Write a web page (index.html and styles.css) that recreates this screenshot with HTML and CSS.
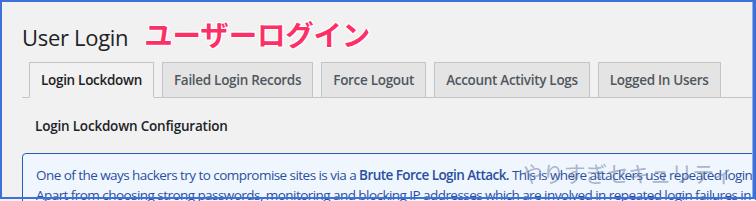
FILE: index.html
```html
<!DOCTYPE html>
<html lang="ja">
<head>
<meta charset="utf-8">
<title>User Login</title>
<link rel="stylesheet" href="styles.css">
</head>
<body>
<div class="wrap">
  <div class="title-row">
    <h1 class="title">User Login</h1>
    <span class="jp-title">ユーザーログイン</span>
  </div>
  <nav class="tabs">
    <a class="tab tab-active">Login Lockdown</a>
    <a class="tab">Failed Login Records</a>
    <a class="tab">Force Logout</a>
    <a class="tab">Account Activity Logs</a>
    <a class="tab">Logged In Users</a>
  </nav>
  <h3 class="section-title">Login Lockdown Configuration</h3>
  <div class="info-box">
    <p class="info-line">One of the ways hackers try to compromise sites is via a <strong>Brute Force Login Attack.</strong> This is where attackers use repeated login attempts until they guess the password.</p>
    <p class="info-line">Apart from choosing strong passwords, monitoring and blocking IP addresses which are involved in repeated login failures in a short period of time is a very effective way to stop these types of attacks.</p>
  </div>
</div>
<div class="watermark">やりすぎセキュリティ</div>
<div class="frame"></div>
</body>
</html>
```
FILE: styles.css
```css
html, body {
  margin: 0;
  padding: 0;
  height: 100%;
  overflow: hidden;
}
body {
  background: #f1f1f1;
  font-family: "Open Sans", "Noto Sans", "Noto Sans CJK JP", sans-serif;
  color: #1d2327;
}
.wrap {
  padding: 0 0 0 22px;
  overflow: hidden;
}
.title-row {
  display: flex;
  align-items: baseline;
  gap: 16px;
  padding-top: 19px;
  height: 43px;
}
.title {
  margin: 0;
  font-size: 22px;
  font-weight: 400;
  line-height: 30px;
  color: #1d2327;
  letter-spacing: -0.3px;
}
.jp-title {
  font-family: "Noto Sans CJK JP", sans-serif;
  font-weight: 700;
  font-size: 28.5px;
  line-height: 30px;
  color: #fd2f68;
  letter-spacing: -0.2px;
  text-shadow: 1px 1px 0 #fff, -1px -1px 0 #fff, 1px -1px 0 #fff, -1px 1px 0 #fff, 0 1px 0 #fff, 0 -1px 0 #fff, 1px 0 0 #fff, -1px 0 0 #fff;
}
.tabs {
  display: flex;
  gap: 8px;
  padding-left: 7px;
  border-bottom: 1px solid #c3c4c7;
  height: 35px;
}
.tab {
  display: block;
  box-sizing: border-box;
  height: 36px;
  padding: 0 11px;
  border: 1px solid #c3c4c7;
  background: #e4e4e4;
  color: #50575e;
  font-size: 13.5px;
  font-weight: 600;
  line-height: 34px;
  white-space: nowrap;
  letter-spacing: -0.3px;
}
.tab-active {
  background: #f1f1f1;
  border-bottom-color: #f1f1f1;
  color: #1d2327;
}
.section-title {
  margin: 0;
  padding: 18px 0 0 13px;
  height: 37px;
  font-size: 13.5px;
  font-weight: 600;
  line-height: 20px;
  letter-spacing: -0.2px;
  color: #1d2327;
}
.info-box {
  width: 760px;
  box-sizing: border-box;
  background: #f0f6fd;
  border: 1px solid #2360b8;
  border-radius: 4px;
  padding: 12px 13px;
  color: #2a4fa2;
  overflow: hidden;
}
.info-line {
  margin: 0;
  font-size: 13.5px;
  line-height: 19.5px;
  white-space: nowrap;
  letter-spacing: -0.55px;
  overflow: hidden;
}
.info-line strong {
  font-weight: 600;
}
.watermark {
  position: absolute;
  left: 521px;
  top: 158px;
  font-family: "Noto Sans CJK JP", sans-serif;
  font-weight: 400;
  font-size: 22px;
  line-height: 28px;
  color: rgba(110, 126, 160, 0.55);
  letter-spacing: -0.6px;
  pointer-events: none;
}
.frame {
  position: absolute;
  left: 0;
  top: 0;
  right: 0;
  bottom: 2px;
  border-style: solid;
  border-color: #3e70d8;
  border-width: 2px 3px 2px 2px;
  box-shadow: inset -1px 0 0 #8fb0ee;
  pointer-events: none;
}
```
